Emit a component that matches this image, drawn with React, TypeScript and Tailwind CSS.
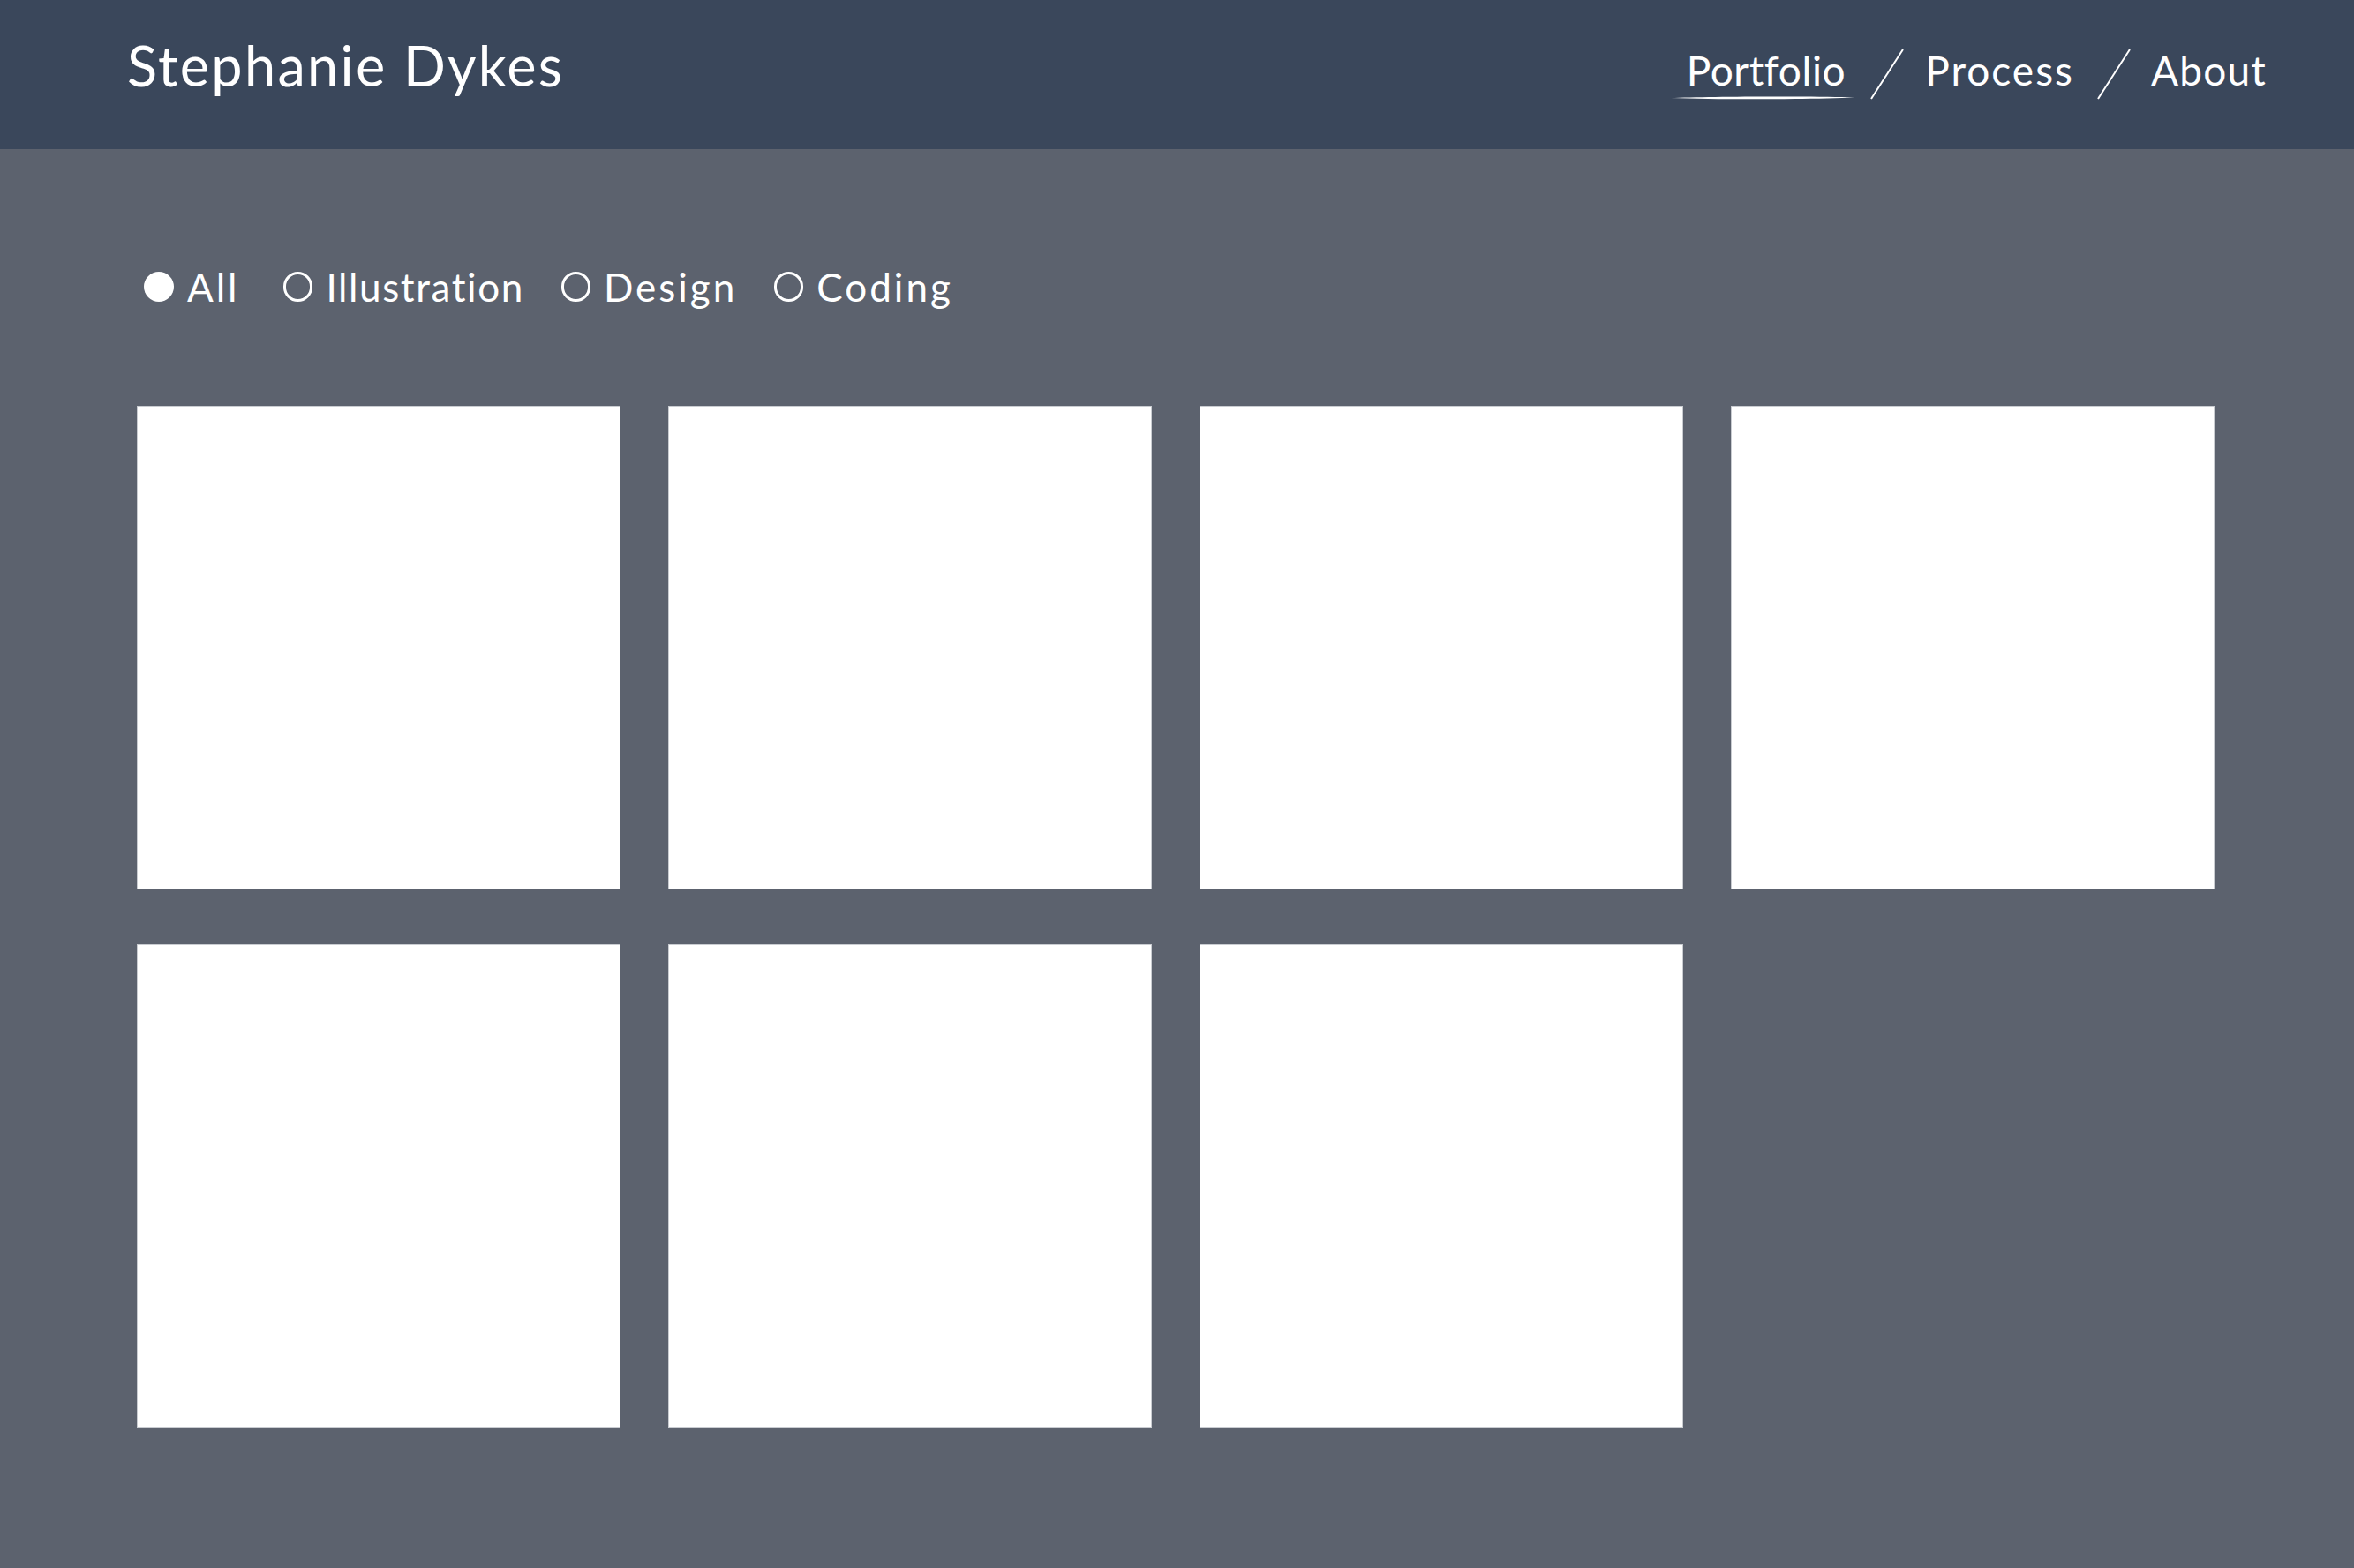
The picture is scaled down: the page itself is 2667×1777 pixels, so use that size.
import React from "react";

const Slash = () => (
  <svg width="38" height="58" viewBox="0 0 38 58" className="block shrink-0">
    <line x1="37" y1="1" x2="1" y2="57" stroke="white" strokeWidth="2" />
  </svg>
);

const Swoosh = () => (
  <svg width="208" height="8" viewBox="0 0 208 8" className="absolute left-[-18px] top-[50px]">
    <path d="M0 4 C 40 2.2, 160 1.8, 208 3.4 C 160 5.4, 60 6.2, 0 4 Z" fill="white" />
  </svg>
);

const Radio = ({ checked }: { checked?: boolean }) =>
  checked ? (
    <span className="block w-[34px] h-[34px] rounded-full bg-white shrink-0" />
  ) : (
    <span className="block w-[33px] h-[34px] rounded-full border-[3px] border-white shrink-0" />
  );

export default function App() {
  const filters = [
    { label: "All", checked: true },
    { label: "Illustration" },
    { label: "Design" },
    { label: "Coding" },
  ];
  return (
    <div
      className="w-[2667px] min-h-[1777px] bg-[#5c626e] text-white [font-variant-ligatures:none]"
      style={{ fontFamily: "Lato, 'Open Sans', sans-serif" }}
    >
      <header className="h-[169px] bg-[#3a475b] flex items-start justify-between pl-[144px] pr-[100px]">
        <h1 className="text-[63px] leading-none font-normal mt-[42px] tracking-[2.3px]">Stephanie Dykes</h1>
        <nav className="flex items-start mt-[55px] tracking-[1.2px]">
          <span className="relative text-[46px] leading-none mt-[2px] tracking-[0.6px]">
            Portfolio
            <Swoosh />
          </span>
          <span className="ml-[28px] mr-[24px]"><Slash /></span>
          <span className="text-[46px] leading-none mt-[2px] tracking-[2px]">Process</span>
          <span className="ml-[26px] mr-[23px]"><Slash /></span>
          <span className="text-[46px] leading-none mt-[2px] -mr-[1px]">About</span>
        </nav>
      </header>
      <main className="pl-[155px] pr-[158px]">
        <div className="flex items-center h-[34px] mt-[139px]">
          {filters.map((f, i) => (
            <div key={f.label} className={"flex items-center gap-[15px] " + (i === 0 ? "mr-[50px]" : "mr-[42px]")}>
              <span className={i === 0 ? "ml-[8px]" : ""}>
                <Radio checked={f.checked} />
              </span>
              <span
                className={
                  "text-[44px] leading-none " +
                  (f.label === "Illustration" ? "tracking-[1.6px]" : "tracking-[3px]")
                }
              >
                {f.label}
              </span>
            </div>
          ))}
        </div>
        <div className="grid grid-cols-[repeat(4,548px)] gap-x-[54px] gap-y-[62px] mt-[118px]">
          {Array.from({ length: 7 }).map((_, i) => (
            <div key={i} className="w-[548px] h-[548px] bg-white border border-[#c9ccd1]" />
          ))}
        </div>
      </main>
    </div>
  );
}
